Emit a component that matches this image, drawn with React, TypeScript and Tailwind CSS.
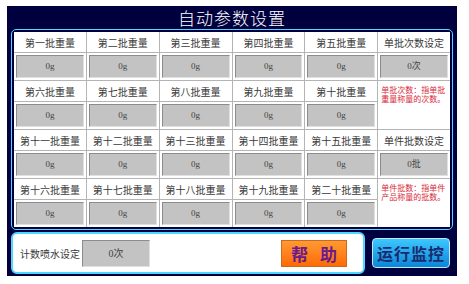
import * as React from 'react';

const cjk = { fontFamily: '"Noto Sans CJK SC", "Liberation Sans", sans-serif' };
const valueFont = { fontFamily: '"Liberation Serif", "Noto Sans CJK SC", serif' };

type Cell = { label: string; value: string } | { note: string } | null;

const rows: Cell[][] = [
  [
    { label: '第一批重量', value: '0g' },
    { label: '第二批重量', value: '0g' },
    { label: '第三批重量', value: '0g' },
    { label: '第四批重量', value: '0g' },
    { label: '第五批重量', value: '0g' },
    { label: '单批次数设定', value: '0次' },
  ],
  [
    { label: '第六批重量', value: '0g' },
    { label: '第七批重量', value: '0g' },
    { label: '第八批重量', value: '0g' },
    { label: '第九批重量', value: '0g' },
    { label: '第十批重量', value: '0g' },
    { note: '单批次数：指单批重量称量的次数。' },
  ],
  [
    { label: '第十一批重量', value: '0g' },
    { label: '第十二批重量', value: '0g' },
    { label: '第十三批重量', value: '0g' },
    { label: '第十四批重量', value: '0g' },
    { label: '第十五批重量', value: '0g' },
    { label: '单件批数设定', value: '0批' },
  ],
  [
    { label: '第十六批重量', value: '0g' },
    { label: '第十七批重量', value: '0g' },
    { label: '第十八批重量', value: '0g' },
    { label: '第十九批重量', value: '0g' },
    { label: '第二十批重量', value: '0g' },
    { note: '单件批数：指单件产品称量的批数。' },
  ],
];

function ValueBox({ value, className }: { value: string; className?: string }) {
  return (
    <div
      className={
        'flex items-center justify-center border border-t-[#8c8c8c] border-l-[#8c8c8c] border-b-[#e0e0e0] border-r-[#e0e0e0] bg-[#c3c3c3] text-[9px] text-[#444] ' +
        (className ?? '')
      }
      style={valueFont}
    >
      {value}
    </div>
  );
}

export default function App() {
  const cells: React.ReactNode[] = [];
  rows.forEach((row, r) => {
    row.forEach((cell, c) => {
      if (!cell) return;
      if ('note' in cell) {
        cells.push(
          <div
            key={`n${r}-${c}`}
            className="bg-white px-[3px] pt-[4px] text-[8px] leading-[9px] text-[#d8283a]"
            style={{ gridColumn: 6, gridRow: `${r * 2 + 1} / span 2`, ...cjk }}
          >
            {cell.note}
          </div>
        );
        return;
      }
      cells.push(
        <div
          key={`l${r}-${c}`}
          className="flex items-center justify-center bg-white text-[10px] text-[#3a3a3a]"
          style={{ gridColumn: c + 1, gridRow: r * 2 + 1, ...cjk }}
        >
          {cell.label}
        </div>
      );
      cells.push(
        <div
          key={`v${r}-${c}`}
          className="flex bg-white p-[2px]"
          style={{ gridColumn: c + 1, gridRow: r * 2 + 2 }}
        >
          <ValueBox value={cell.value} className="flex-1" />
        </div>
      );
    });
  });

  return (
    <div className="h-[284px] w-[469px] bg-white pl-[7px] pt-[6px]">
      <div className="flex h-[270px] w-[450px] flex-col bg-[#00003e]">
        <div
          className="flex h-[23px] items-center justify-center text-[17px] font-light leading-none tracking-[1px] text-white"
          style={{ fontFamily: '"Noto Sans CJK SC", "Liberation Serif", serif' }}
        >
          自动参数设置
        </div>

        <div className="ml-[4px] w-[442px] rounded-[5px] border border-[#4fd8ff] bg-[#00003e] p-[2px]">
          <div className="grid grid-cols-6 grid-rows-[20px_27px_20px_27px_20px_27px_20px_27px] gap-px bg-[#b4b4b4]">
            {cells}
          </div>
        </div>

        <div className="mt-[2px] ml-[4px] flex items-center">
          <div className="flex h-[42px] w-[354px] items-center rounded-[6px] border-2 border-[#4fd8ff] bg-white pl-[7px]">
            <span className="w-[62px] text-[10px] text-[#3a3a3a]" style={cjk}>
              计数喷水设定
            </span>
            <ValueBox value="0次" className="h-[27px] w-[68px] text-[10px]" />
            <button
              className="ml-[131px] flex h-[27px] w-[66px] items-center justify-center gap-[12px] border border-[#c96a20] bg-gradient-to-b from-[#ff9a30] to-[#ff6a00] text-[17px] font-bold leading-none text-[#6b1a8c]"
              style={{ fontFamily: '"Noto Sans CJK SC", serif' }}
            >
              <span>帮</span>
              <span>助</span>
            </button>
          </div>
          <button
            className="ml-[7px] flex h-[30px] w-[78px] items-center justify-center rounded-[4px] border border-[#bfe8ff] bg-gradient-to-b from-[#3cc8ff] to-[#0a86d8] text-[16px] font-bold leading-none tracking-[1px] text-[#1a2a6e]"
            style={{ fontFamily: '"Noto Sans CJK SC", serif' }}
          >
            运行监控
          </button>
        </div>
      </div>
    </div>
  );
}
